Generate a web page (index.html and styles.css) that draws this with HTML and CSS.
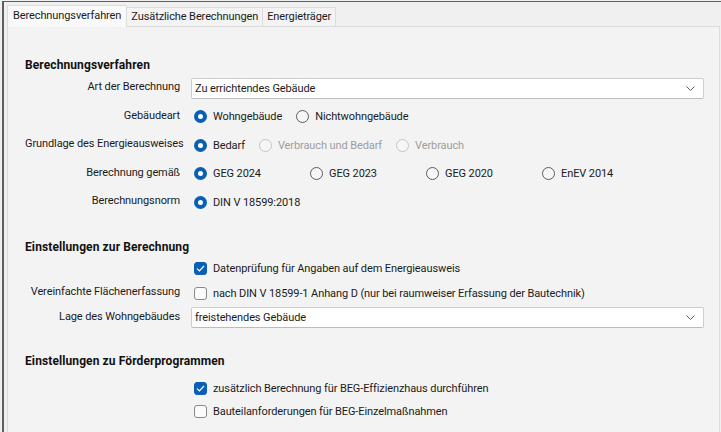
FILE: index.html
```html
<!DOCTYPE html>
<html lang="de">
<head>
    <meta charset="UTF-8">
    <title>Berechnungsverfahren</title>
    <link rel="stylesheet" href="styles.css">
</head>
<body>
    <div class="frame">
        <div class="tabs">
            <div class="tab active">Berechnungsverfahren</div>
            <div class="tab">Zusätzliche Berechnungen</div>
            <div class="tab">Energieträger</div>
        </div>

        <div class="panel">
            <section class="section first">
                <h2 class="section-title">Berechnungsverfahren</h2>
                <div class="form-grid rows-main">
                    <div class="label">Art der Berechnung</div>
                    <div class="control">
                        <div class="select">
                            <span>Zu errichtendes Gebäude</span>
                            <svg class="chevron" width="9" height="5" viewBox="0 0 9 5"><path d="M0.5 0.5 L4.5 4.5 L8.5 0.5" fill="none" stroke="#5f5f5f" stroke-width="1"/></svg>
                        </div>
                    </div>

                    <div class="label">Gebäudeart</div>
                    <div class="control options">
                        <label class="opt"><span class="radio checked"></span>Wohngebäude</label>
                        <label class="opt"><span class="radio"></span>Nichtwohngebäude</label>
                    </div>

                    <div class="label">Grundlage des Energieausweises</div>
                    <div class="control options">
                        <label class="opt"><span class="radio checked"></span>Bedarf</label>
                        <label class="opt disabled"><span class="radio"></span>Verbrauch und Bedarf</label>
                        <label class="opt disabled"><span class="radio"></span>Verbrauch</label>
                    </div>

                    <div class="label">Berechnung gemäß</div>
                    <div class="control options cols">
                        <label class="opt"><span class="radio checked"></span>GEG 2024</label>
                        <label class="opt"><span class="radio"></span>GEG 2023</label>
                        <label class="opt"><span class="radio"></span>GEG 2020</label>
                        <label class="opt"><span class="radio"></span>EnEV 2014</label>
                    </div>

                    <div class="label">Berechnungsnorm</div>
                    <div class="control options">
                        <label class="opt"><span class="radio checked"></span>DIN V 18599:2018</label>
                    </div>
                </div>
            </section>

            <section class="section second">
                <h2 class="section-title">Einstellungen zur Berechnung</h2>
                <div class="form-grid rows-settings">
                    <div class="label"></div>
                    <div class="control">
                        <label class="opt"><span class="check checked"><svg width="9" height="7" viewBox="0 0 9 7"><path d="M1 3.6 L3.4 6 L8 1" fill="none" stroke="#fff" stroke-width="1.2"/></svg></span>Datenprüfung für Angaben auf dem Energieausweis</label>
                    </div>

                    <div class="label">Vereinfachte Flächenerfassung</div>
                    <div class="control">
                        <label class="opt"><span class="check"></span>nach DIN V 18599-1 Anhang D (nur bei raumweiser Erfassung der Bautechnik)</label>
                    </div>

                    <div class="label">Lage des Wohngebäudes</div>
                    <div class="control">
                        <div class="select">
                            <span>freistehendes Gebäude</span>
                            <svg class="chevron" width="9" height="5" viewBox="0 0 9 5"><path d="M0.5 0.5 L4.5 4.5 L8.5 0.5" fill="none" stroke="#5f5f5f" stroke-width="1"/></svg>
                        </div>
                    </div>
                </div>
            </section>

            <section class="section third">
                <h2 class="section-title">Einstellungen zu Förderprogrammen</h2>
                <div class="form-grid rows-funding">
                    <div class="label"></div>
                    <div class="control">
                        <label class="opt"><span class="check checked"><svg width="9" height="7" viewBox="0 0 9 7"><path d="M1 3.6 L3.4 6 L8 1" fill="none" stroke="#fff" stroke-width="1.2"/></svg></span>zusätzlich Berechnung für BEG-Effizienzhaus durchführen</label>
                    </div>

                    <div class="label"></div>
                    <div class="control">
                        <label class="opt"><span class="check"></span>Bauteilanforderungen für BEG-Einzelmaßnahmen</label>
                    </div>
                </div>
            </section>
        </div>
    </div>
</body>
</html>
```

FILE: styles.css
```css
* {
    margin: 0;
    padding: 0;
    box-sizing: border-box;
}

html, body {
    height: 100%;
}

body {
    font-family: Roboto, "Liberation Sans", Arial, sans-serif;
    font-size: 11px;
    letter-spacing: -0.1px;
    color: #1b1b1b;
    background: #f0f0f0;
    overflow: hidden;
}

.frame {
    margin: 1px 0 0 2px;
    height: calc(100% - 1px);
    border-top: 1px solid #5f5f5f;
    border-left: 2px solid #5f5f5f;
    padding: 3px 1px 0 3px;
    display: flex;
    flex-direction: column;
}

/* tab strip */
.tabs {
    display: flex;
    align-items: flex-end;
    height: 21px;
}

.tab {
    height: 19px;
    padding: 0 4px;
    line-height: 18px;
    background: #f3f3f3;
    border: 1px solid #dcdcdc;
    border-bottom: none;
    border-left: none;
    color: #1b1b1b;
}

.tab.active {
    height: 22px;
    margin-bottom: -1px;
    padding: 0 5px;
    line-height: 20px;
    background: #f9f9f9;
    border-left: 1px solid #dcdcdc;
    position: relative;
    z-index: 1;
}

/* content panel */
.panel {
    flex: 1;
    background: #f3f3f3;
    border: 1px solid #dcdcdc;
    border-bottom: none;
    padding: 30px 0 0 17px;
}

.section-title {
    font-size: 12px;
    font-weight: 700;
    line-height: 16px;
    letter-spacing: 0.1px;
    color: #111;
}

.section.second {
    margin-top: 22px;
}

.section.third {
    margin-top: 23px;
}

.form-grid {
    display: grid;
    grid-template-columns: 155px 513px;
    column-gap: 11px;
    align-items: center;
}

.rows-main {
    margin-top: 1px;
    grid-auto-rows: 28.5px;
}

.rows-settings {
    margin-top: 2px;
    grid-auto-rows: 24.5px;
}

.rows-funding {
    margin-top: 8px;
    grid-auto-rows: 23px;
}

.label {
    text-align: right;
    white-space: nowrap;
    padding-bottom: 3px;
}

.control {
    display: flex;
    align-items: center;
    white-space: nowrap;
}

/* dropdown */
.select {
    width: 100%;
    height: 21px;
    background: #fff;
    border: 1px solid #cdcdcd;
    border-bottom-color: #bcbcbc;
    border-radius: 2px;
    display: flex;
    align-items: center;
    justify-content: space-between;
    padding: 0 8px 0 3px;
}

.chevron {
    display: block;
}

/* radio + checkbox options */
.options {
    gap: 11px;
}

.options.cols {
    display: grid;
    grid-template-columns: repeat(4, 116px);
    gap: 0;
}

.opt {
    display: inline-flex;
    align-items: center;
    gap: 6px;
    padding-left: 3px;
}

.opt.disabled {
    color: #9d9d9d;
}

.radio {
    width: 13px;
    height: 13px;
    border-radius: 50%;
    border: 1px solid #5c5c5c;
    background: #f6f6f6;
    flex-shrink: 0;
}

.radio.checked {
    border: 4px solid #0a5fb4;
    background: #fff;
}

.disabled .radio {
    border-color: #c4c4c4;
    background: #f6f6f6;
}

.check {
    width: 13px;
    height: 13px;
    border-radius: 3px;
    border: 1px solid #8a8a8a;
    background: #fbfbfb;
    flex-shrink: 0;
    display: flex;
    align-items: center;
    justify-content: center;
}

.check.checked {
    background: #0a5fb4;
    border-color: #0a5fb4;
}

.check svg {
    display: block;
}
```
